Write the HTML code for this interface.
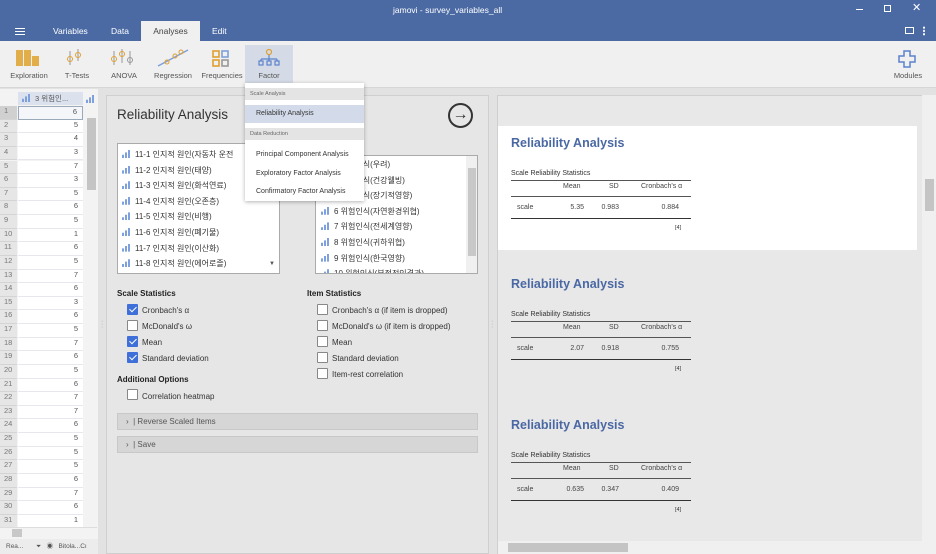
<!DOCTYPE html><html><head><meta charset="utf-8"><style>
*{box-sizing:border-box;margin:0;padding:0}
body{width:936px;height:554px;overflow:hidden;background:#e2e2e2;font-family:"Liberation Sans","Noto Sans CJK KR",sans-serif;font-size:8px;color:#333;position:relative}
.a{position:absolute}
.title{left:0;top:0;width:936px;height:41px;background:#4b6aa4;color:#fff}
.tab{top:21px;height:20px;line-height:20px;font-size:8.5px;color:#fff}
.tool{top:41px;left:0;width:936px;height:47px;background:#f0f0f0;border-bottom:1px solid #d6d6d6}
.tl{top:71px;font-size:7.5px;color:#555;text-align:center}
.row{position:absolute;left:0;width:97px;height:13.6px;font-size:7.5px;color:#777}
.row .n{position:absolute;left:0;width:17px;height:100%;background:#e6e6e6;padding-left:4px;border-bottom:1px solid #d4d4d4}
.row .v{position:absolute;left:18px;width:65px;height:100%;background:#fff;text-align:right;padding-right:5px;color:#555;border-bottom:1px solid #e6e8ee}
.li{position:absolute;font-size:8px;color:#333;white-space:nowrap}
.bar{display:inline-block;width:9px;height:8px;margin-right:4px;vertical-align:-1px;background:linear-gradient(90deg,#7ea0dd 0 2px,transparent 2px 3px,#7ea0dd 3px 5px,transparent 5px 6px,#7ea0dd 6px 8px,transparent 8px);clip-path:polygon(0 60%,33% 60%,33% 30%,66% 30%,66% 0,100% 0,100% 100%,0 100%)}
.cb{position:absolute;width:11px;height:11px;border:1px solid #888;background:#fff;border-radius:1px}
.cb.on{background:#3f6fd8;border-color:#3f6fd8}
.cb.on:after{content:"";position:absolute;left:3px;top:0px;width:3px;height:6px;border:solid #fff;border-width:0 1.5px 1.5px 0;transform:rotate(45deg)}
.cl{position:absolute;font-size:8px;color:#333}
.h{position:absolute;font-size:8px;font-weight:bold;color:#222}
.rt{position:absolute;font-size:12.5px;font-weight:bold;color:#4a68a3}
.st{position:absolute;font-size:7px;color:#333}
.tb{position:absolute;width:180px;font-size:7px;color:#444}
</style></head><body>
<div class="a title"></div>
<div class="a" style="left:393px;top:5px;color:#fff;font-size:8.5px">jamovi - survey_variables_all</div>
<div class="a" style="left:856px;top:9px;width:7px;height:1px;background:#fff"></div>
<div class="a" style="left:884px;top:5px;width:7px;height:7px;border:1px solid #fff"></div>
<div class="a" style="left:912px;top:1px;color:#fff;font-size:11px">✕</div>
<div class="a" style="left:905px;top:27px;width:9px;height:7px;border:1px solid #fff"></div>
<div class="a" style="left:923px;top:26px;width:2px;height:10px;background:radial-gradient(circle,#fff 1px,transparent 1px) 0 0/2px 3.3px"></div>
<div class="a" style="left:15px;top:28px;width:10px;height:7px;border-top:1.3px solid #fff;border-bottom:1.3px solid #fff"></div>
<div class="a" style="left:15px;top:31px;width:10px;height:1.3px;background:#fff"></div>
<div class="a tab" style="left:53px">Variables</div>
<div class="a tab" style="left:111px">Data</div>
<div class="a tab" style="left:141px;width:59px;background:#f0f0f0;color:#444;text-align:center">Analyses</div>
<div class="a tab" style="left:212px">Edit</div>
<div class="a tool"></div>
<div class="a" style="left:245px;top:45px;width:48px;height:38px;background:#d5dbe6"></div>
<div class="a" style="left:16px;top:50px;width:7px;height:16px;background:#e2ae4a"></div>
<div class="a" style="left:24px;top:50px;width:7px;height:16px;background:#e2ae4a"></div>
<div class="a" style="left:32px;top:56px;width:7px;height:10px;background:#e2ae4a"></div>
<svg class="a" style="left:64px;top:48px" width="24" height="20"><g stroke="#999" fill="none"><path d="M6 3v14M14 1v12"/><circle cx="6" cy="11" r="2.5" stroke="#e0a030"/><circle cx="14" cy="7" r="2.5" stroke="#e0a030"/></g></svg>
<svg class="a" style="left:110px;top:48px" width="24" height="20"><g stroke="#999" fill="none"><path d="M4 3v14M12 1v14M20 3v14"/><circle cx="4" cy="11" r="2.5" stroke="#e0a030"/><circle cx="12" cy="6" r="2.5" stroke="#e0a030"/><circle cx="20" cy="12" r="2.5"/></g></svg>
<svg class="a" style="left:157px;top:48px" width="32" height="20"><path d="M1 18L31 2" stroke="#7ea0dd" stroke-width="1.5"/><g fill="none" stroke="#e0a030"><circle cx="10" cy="14" r="2"/><circle cx="18" cy="8" r="2"/><circle cx="24" cy="4" r="2"/></g></svg>
<svg class="a" style="left:212px;top:50px" width="18" height="18"><g fill="none" stroke-width="1.6"><rect x="1" y="1" width="6" height="6" stroke="#e0a030"/><rect x="10" y="1" width="6" height="6" stroke="#7ea0dd"/><rect x="1" y="10" width="6" height="6" stroke="#e0a030"/><rect x="10" y="10" width="6" height="6" stroke="#999"/></g></svg>
<svg class="a" style="left:258px;top:48px" width="22" height="20"><g fill="none" stroke="#5b82cc" stroke-width="1.2"><circle cx="11" cy="4" r="2.5" stroke="#e0a030"/><path d="M11 7v4M3 11h16M3 11v2M11 11v2M19 11v2"/><rect x="1" y="13" width="4" height="4"/><rect x="9" y="13" width="4" height="4"/><rect x="17" y="13" width="4" height="4"/></g></svg>
<svg class="a" style="left:898px;top:50px" width="18" height="18"><path d="M6 1h6v5h5v6h-5v5H6v-5H1V6h5z" fill="none" stroke="#5b82cc" stroke-width="1.5"/></svg>
<div class="a tl" style="left:6px;width:46px">Exploration</div>
<div class="a tl" style="left:60px;width:34px">T-Tests</div>
<div class="a tl" style="left:104px;width:40px">ANOVA</div>
<div class="a tl" style="left:150px;width:46px">Regression</div>
<div class="a tl" style="left:199px;width:46px">Frequencies</div>
<div class="a tl" style="left:245px;width:48px">Factor</div>
<div class="a tl" style="left:888px;width:40px">Modules</div>
<div class="a" style="left:0;top:89px;width:98px;height:465px;background:#f3f3f3"></div>
<div class="a" style="left:18px;top:92px;width:65px;height:13px;background:#dbe2ee;font-size:7.5px;color:#555;padding-left:4px;line-height:13px"><span class="bar"></span>3 위험인...</div>
<div class="a" style="left:86px;top:95px"><span class="bar"></span></div>
<div id="rows"></div>
<div class="a" style="left:85px;top:106px;width:12px;height:421px;background:#f3f3f3"></div>
<div class="a" style="left:87px;top:118px;width:9px;height:72px;background:#c4c4c4"></div>
<div class="a" style="left:0;top:527px;width:97px;height:11px;background:#f3f3f3;border-top:1px solid #ddd"></div>
<div class="a" style="left:12px;top:529px;width:10px;height:8px;background:#c8c8c8"></div>
<div class="a" style="left:0;top:539px;width:98px;height:15px;background:#ececec;font-size:6.5px;color:#555;line-height:15px;padding-left:6px">Rea... &nbsp;&nbsp;&nbsp;&nbsp;&nbsp; ⏷ &nbsp; ◉ &nbsp;&nbsp;Bitola...Cı</div>
<div class="a" style="left:106px;top:95px;width:383px;height:459px;background:#e6e6e6;border:1px solid #cfcfcf"></div>
<div class="a" style="left:117px;top:107px;font-size:13.5px;color:#333">Reliability Analysis</div>
<div class="a" style="left:448px;top:103px;width:25px;height:25px;border:2px solid #333;border-radius:50%;font-size:16px;line-height:20px;text-align:center;color:#333">→</div>
<div class="a" style="left:117px;top:143px;width:163px;height:131px;background:#fff;border:1px solid #aaa;overflow:hidden">
<div class="li" style="left:4px;top:5px"><span class="bar"></span>11-1 인지적 원인(자동차 운전</div>
<div class="li" style="left:4px;top:20.6px"><span class="bar"></span>11-2 인지적 원인(태양)</div>
<div class="li" style="left:4px;top:36.2px"><span class="bar"></span>11-3 인지적 원인(화석연료)</div>
<div class="li" style="left:4px;top:51.8px"><span class="bar"></span>11-4 인지적 원인(오존층)</div>
<div class="li" style="left:4px;top:67.4px"><span class="bar"></span>11-5 인지적 원인(비행)</div>
<div class="li" style="left:4px;top:83px"><span class="bar"></span>11-6 인지적 원인(폐기물)</div>
<div class="li" style="left:4px;top:98.6px"><span class="bar"></span>11-7 인지적 원인(이산화)</div>
<div class="li" style="left:4px;top:114.2px"><span class="bar"></span>11-8 인지적 원인(에어로졸)</div>
<div class="a" style="left:151px;top:117px;font-size:6px;color:#555">▼</div>
</div>
<div class="a" style="left:315px;top:155px;width:163px;height:119px;background:#fff;border:1px solid #aaa;overflow:hidden">
<div class="li" style="left:5px;top:3px"><span class="bar"></span>3 위험인식(우려)</div>
<div class="li" style="left:5px;top:18.6px"><span class="bar"></span>4 위험인식(건강웰빙)</div>
<div class="li" style="left:5px;top:34.2px"><span class="bar"></span>5 위험인식(장기적영향)</div>
<div class="li" style="left:5px;top:49.8px"><span class="bar"></span>6 위험인식(자연환경위협)</div>
<div class="li" style="left:5px;top:65.4px"><span class="bar"></span>7 위험인식(전세계영향)</div>
<div class="li" style="left:5px;top:81px"><span class="bar"></span>8 위험인식(귀하위협)</div>
<div class="li" style="left:5px;top:96.6px"><span class="bar"></span>9 위험인식(한국영향)</div>
<div class="li" style="left:5px;top:112.2px"><span class="bar"></span>10 위험인식(부정적인결과)</div>
<div class="a" style="left:150px;top:0;width:12px;height:119px;background:#f0f0f0"></div>
<div class="a" style="left:152px;top:12px;width:8px;height:88px;background:#c8c8c8"></div>
</div>
<div class="a" style="left:245px;top:83px;width:119px;height:118px;background:#fff;box-shadow:0 1px 4px rgba(0,0,0,.3)"></div>
<div class="a" style="left:245px;top:88px;width:119px;height:12px;background:#e4e4e4;font-size:5.5px;color:#666;padding:3px 0 0 5px">Scale Analysis</div>
<div class="a" style="left:245px;top:105px;width:119px;height:18px;background:#d3dbea;font-size:7px;color:#333;padding:5px 0 0 11px">Reliability Analysis</div>
<div class="a" style="left:245px;top:128px;width:119px;height:12px;background:#e4e4e4;font-size:5.5px;color:#666;padding:3px 0 0 5px">Data Reduction</div>
<div class="a" style="left:256px;top:151px;font-size:7px;color:#333">Principal Component Analysis</div>
<div class="a" style="left:256px;top:170px;font-size:7px;color:#333">Exploratory Factor Analysis</div>
<div class="a" style="left:256px;top:188px;font-size:7px;color:#333">Confirmatory Factor Analysis</div>
<div class="h" style="left:117px;top:289px">Scale Statistics</div>
<div class="h" style="left:307px;top:289px">Item Statistics</div>
<div class="cb on" style="left:127px;top:304px"></div><div class="cl" style="left:142px;top:306px">Cronbach's α</div>
<div class="cb" style="left:127px;top:320px"></div><div class="cl" style="left:142px;top:322px">McDonald's ω</div>
<div class="cb on" style="left:127px;top:336px"></div><div class="cl" style="left:142px;top:338px">Mean</div>
<div class="cb on" style="left:127px;top:352px"></div><div class="cl" style="left:142px;top:354px">Standard deviation</div>
<div class="h" style="left:117px;top:375px">Additional Options</div>
<div class="cb" style="left:127px;top:389px"></div><div class="cl" style="left:142px;top:392px">Correlation heatmap</div>
<div class="cb" style="left:317px;top:304px"></div><div class="cl" style="left:332px;top:306px">Cronbach's α (if item is dropped)</div>
<div class="cb" style="left:317px;top:320px"></div><div class="cl" style="left:332px;top:322px">McDonald's ω (if item is dropped)</div>
<div class="cb" style="left:317px;top:336px"></div><div class="cl" style="left:332px;top:338px">Mean</div>
<div class="cb" style="left:317px;top:352px"></div><div class="cl" style="left:332px;top:354px">Standard deviation</div>
<div class="cb" style="left:317px;top:368px"></div><div class="cl" style="left:332px;top:370px">Item-rest correlation</div>
<div class="a" style="left:117px;top:413px;width:361px;height:17px;background:#d6d6d6;border:1px solid #c8c8c8;font-size:8px;color:#555;line-height:15px;padding-left:8px">›&nbsp; | Reverse Scaled Items</div>
<div class="a" style="left:117px;top:436px;width:361px;height:17px;background:#d6d6d6;border:1px solid #c8c8c8;font-size:8px;color:#555;line-height:15px;padding-left:8px">›&nbsp; | Save</div>
<div class="a" style="left:101px;top:320px;color:#aaa;font-size:7px;line-height:3px">·<br>·<br>·</div>
<div class="a" style="left:491px;top:320px;color:#aaa;font-size:7px;line-height:3px">·<br>·<br>·</div>
<div class="a" style="left:497px;top:95px;width:426px;height:459px;background:#e8e8e8;border:1px solid #cfcfcf"></div>
<div class="a" style="left:922px;top:95px;width:14px;height:459px;background:#f0f0f0"></div>
<div class="a" style="left:925px;top:179px;width:9px;height:32px;background:#c4c4c4"></div>
<div class="a" style="left:498px;top:541px;width:424px;height:13px;background:#f0f0f0"></div>
<div class="a" style="left:508px;top:543px;width:120px;height:9px;background:#c4c4c4"></div>
<div class="a" style="left:498px;top:126px;width:419px;height:124px;background:#fff"></div>
<div id="res"></div>
<script>
var v=[6,5,4,3,7,3,5,6,5,1,6,5,7,6,3,6,5,7,6,5,6,7,7,6,5,5,5,6,7,6,1],h='';
for(var i=0;i<31;i++){h+='<div class="row" style="top:'+(106+i*13.63)+'px"><div class="n"'+(i==0?' style="background:#d0d0d0"':'')+'>'+(i+1)+'</div><div class="v"'+(i==0?' style="border:1px solid #9ab;background:#f4f6fa"':'')+'>'+v[i]+'</div></div>';}
document.getElementById('rows').innerHTML=h;
var d=[['5.35','0.983','0.884'],['2.07','0.918','0.755'],['0.635','0.347','0.409']],r='';
for(var k=0;k<3;k++){var y=136+k*141;
r+='<div class="rt" style="left:511px;top:'+y+'px">Reliability Analysis</div>'+
'<div class="st" style="left:511px;top:'+(y+34)+'px">Scale Reliability Statistics</div>'+
'<div class="a" style="left:511px;top:'+(y+44)+'px;width:180px;border-top:1px solid #555"></div>'+
'<div class="tb" style="left:511px;top:'+(y+47)+'px"><span class="a" style="left:52px">Mean</span><span class="a" style="left:98px">SD</span><span class="a" style="left:130px">Cronbach\'s α</span></div>'+
'<div class="a" style="left:511px;top:'+(y+60)+'px;width:180px;border-top:1px solid #555"></div>'+
'<div class="tb" style="left:511px;top:'+(y+68)+'px"><span class="a" style="left:6px">scale</span><span class="a" style="right:107px">'+d[k][0]+'</span><span class="a" style="right:72px">'+d[k][1]+'</span><span class="a" style="right:12px">'+d[k][2]+'</span></div>'+
'<div class="a" style="left:511px;top:'+(y+82)+'px;width:180px;border-top:1.5px solid #333"></div>'+
'<div class="st" style="left:675px;top:'+(y+89)+'px;font-size:5.5px">[4]</div>';}
document.getElementById('res').innerHTML=r;
</script>
</body></html>
